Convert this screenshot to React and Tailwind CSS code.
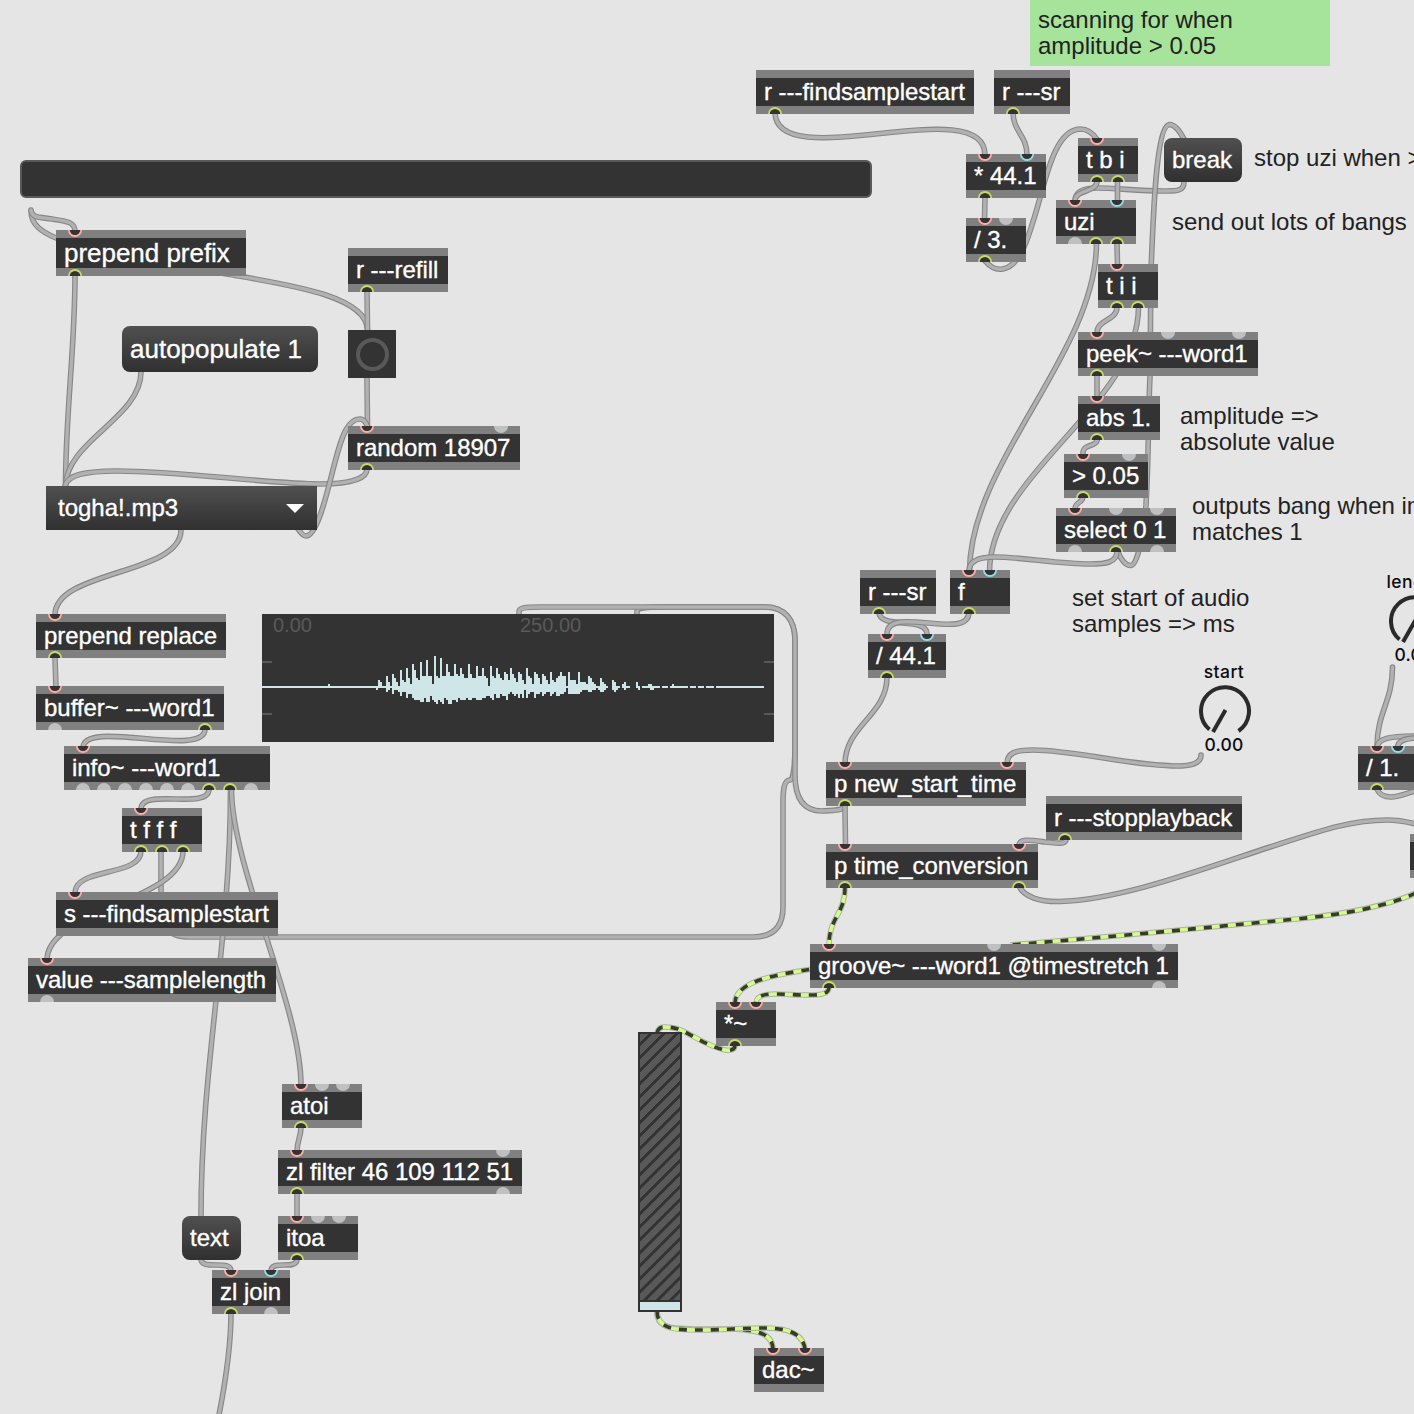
import React from "react";

const P = "#ffaca1";
const L = "#c9dc62";
const C = "#8fdde9";
const G = null;

// [x, y, width, label, inlets, outlets, height?]
const objects = [
  [56, 230, 190, "prepend prefix", [[19, P]], [[19, L]], 46],
  [348, 248, 100, "r ---refill", [], [[19, L]]],
  [348, 426, 172, "random 18907", [[19, P], [153, G]], [[19, L]]],
  [36, 614, 190, "prepend replace", [[19, P]], [[19, L]]],
  [36, 686, 188, "buffer~ ---word1", [[19, P]], [[19, G], [169, L]]],
  [64, 746, 206, "info~ ---word1", [[19, P]], [[19, G], [40, G], [61, G], [82, G], [103, G], [124, G], [145, L], [166, L], [187, G]]],
  [122, 808, 80, "t f f f", [[19, P]], [[19, L], [40, L], [61, L]]],
  [56, 892, 222, "s ---findsamplestart", [[19, P]], []],
  [28, 958, 248, "value ---samplelength", [[19, P]], [[19, G]]],
  [282, 1084, 80, "atoi", [[19, P], [40, G], [61, G]], [[19, L]]],
  [278, 1150, 244, "zl filter 46 109 112 51", [[19, P], [225, G]], [[19, L], [225, G]]],
  [278, 1216, 80, "itoa", [[19, P], [40, G], [61, G]], [[19, L]]],
  [212, 1270, 78, "zl join", [[19, P], [59, C]], [[19, L], [59, G]]],
  [756, 70, 218, "r ---findsamplestart", [], [[19, L]]],
  [994, 70, 76, "r ---sr", [], [[19, L]]],
  [966, 154, 80, "* 44.1", [[19, P], [61, C]], [[19, L]]],
  [966, 218, 60, "/ 3.", [[19, P], [40, G]], [[19, L]]],
  [1078, 138, 60, "t b i", [[19, P]], [[19, L], [40, L]]],
  [1056, 200, 80, "uzi", [[19, P], [61, C]], [[19, G], [40, L], [61, L]]],
  [1098, 264, 60, "t i i", [[19, P]], [[19, L], [40, L]]],
  [1078, 332, 180, "peek~ ---word1", [[19, P], [90, G], [161, G]], [[19, L]]],
  [1078, 396, 82, "abs 1.", [[19, P]], [[19, L]]],
  [1064, 454, 84, "> 0.05", [[19, P], [65, G]], [[19, L]]],
  [1056, 508, 120, "select 0 1", [[19, P], [60, G], [101, G]], [[19, G], [60, L], [101, G]]],
  [950, 570, 60, "f", [[19, P], [40, C]], [[19, L]]],
  [860, 570, 76, "r ---sr", [], [[19, L]]],
  [868, 634, 78, "/ 44.1", [[19, P], [59, C]], [[19, L]]],
  [826, 762, 200, "p new_start_time", [[19, P], [181, P]], [[19, L]]],
  [826, 844, 212, "p time_conversion", [[19, P], [193, P]], [[19, L], [193, L]]],
  [1046, 796, 196, "r ---stopplayback", [], [[19, L]]],
  [810, 944, 368, "groove~ ---word1 @timestretch 1", [[19, P], [184, G], [349, G]], [[19, L], [349, G]]],
  [716, 1002, 60, "*~", [[19, P], [40, P]], [[19, L]]],
  [754, 1348, 70, "dac~", [[19, P], [51, P]], []],
  [1358, 746, 80, "/ 1.", [[19, P], [40, C]], [[19, L]]],
  [1410, 834, 60, "", [], []],
];

// S-shaped cord leaving downward and arriving from above
const s = (x1, y1, x2, y2, d) => `M${x1} ${y1} C${x1} ${y1 + d},${x2} ${y2 - d},${x2} ${y2}`;

const cords = [
  s(775, 112, 985, 155, 65),
  s(1013, 112, 1027, 155, 20),
  "M985 196 L984.5 220",
  "M985 261 C992 269,998 270,1003 269 C1020 266,1028 240,1038 205 C1046 178,1055 130,1080 129 C1087 129,1093 133,1097.500 140",
  "M1184 182 C1184 192,1175 191,1163 191 C1140 191,1115 188,1097 188 C1083 188,1075 192,1075 201",
  s(1097, 181, 1075, 201, 12),
  "M1117.500 181 L1117.500 201",
  "M1118 552 C1121 560,1126 566,1131 565.500 C1138 565,1144 530,1146 505 C1149 450,1148 420,1150 376 L1151 270 C1153 230,1155 124,1170 124.500 C1176 125,1180 132,1184 139",
  s(1096.5, 243, 969.5, 572, 110),
  "M1117 243 L1117.500 265",
  s(1117, 307, 1097, 333, 14),
  s(1138.5, 307, 989.5, 572, 98),
  "M1097 375 L1097 395",
  s(1097.5, 438, 1083, 453, 10),
  s(1083, 496, 1075, 509, 8),
  "M1117 551 C1117 563,1105 564,1090 564 C1060 564,1020 557,995 557 C980 557,969 560,969 571",
  s(879, 612, 927, 634, 18),
  s(969, 612, 887, 634, 30),
  s(887, 677, 845, 764, 38),
  "M1201 755 C1201 764,1190 766,1178 766 C1130 766,1075 750,1033 750 C1015 750,1007 753,1007 764",
  "M161 851 L161 900 C161 925,165 937,190 937 L753 937 C773 937,783 927,783 907 L783 803 C783 790,784 780,790 780 C794 780,795 760,795 745 L795 640 C795 620,785 607,765 607 L665 607 C645 607,637 608,637 611 L637 616",
  "M845 804 C845 811,835 810,822 811 C805 811,795 800,795 775 L795 640 C795 620,785 607,765 607 L540 607 C524 607,519 608,519 612 L519 616",
  "M845 806 L845.500 846",
  "M1066 839 C1066 845,1058 843,1045 842 C1030 840,1019 838,1019 846",
  "M1019 886 C1024 897,1040 902,1060 901.500 C1120 900,1200 870,1270 847 C1320 831,1350 820,1387 820 C1400 820,1408 822,1416 824",
  "M31 211 C31 225,42 232,56 238 C100 255,170 264,227 274 C290 285,367 296,367.500 330",
  "M31 210 C32 218,38 217,52 219 C66 221,75 222,75 231",
  s(75, 275, 65.5, 487, 75),
  s(141, 372, 65.5, 487, 46),
  "M367 469 C367 480,345 484,320 484 C270 484,180 471,117 471 C85 471,66 475,65 487",
  "M367 291 L367.500 330",
  "M367 378 L367.500 428",
  "M298 529 C301 533,303 536,306 536 C318 536,328 488,335 462 C342 435,348 419,360 419 C364 419,367 424,368 428",
  s(181, 530, 55, 615, 45),
  "M55 658 L56 688",
  s(205, 729, 83, 748, 30),
  s(209, 789, 141, 809, 22),
  s(230.5, 789, 201, 1217, 155),
  s(231.5, 789, 301, 1085, 78),
  s(183, 851, 47, 960, 50),
  s(141, 851, 75, 893, 26),
  s(301, 1127, 297, 1151, 10),
  "M297 1193 L297 1217",
  s(297, 1259, 271, 1271, 12),
  s(201, 1259, 231, 1271, 12),
  "M231 1313 C231 1350,225 1385,218 1420",
  s(1392.5, 667, 1377, 747, 35),
  "M1420 736 C1390 736,1377 738,1377 748",
  "M1420 738 C1404 738,1397.500 741,1397.500 748",
  "M1377 789 C1379 794,1384 797,1391 797 C1400 797,1407 793,1418 790",
];

const signals = [
  s(845, 887, 829, 945, 28),
  "M1416 893 C1385 907,1345 914,1297 919 C1230 925,1180 931,1010 945",
  "M829 987 C829 996,815 995,805 995 C795 995,785 994,775 994 C762 994,756 997,756 1003",
  "M825 967 C790 973,735 978,735 1003",
  "M735 1045 C735 1050,730 1051,725 1050 C710 1047,695 1037,683 1031 C675 1027,667 1027,664 1027 C660 1027,658 1029,657 1033",
  "M657 1311 C657 1331,672 1329,730 1329 C755 1330,773 1332,773 1350",
  "M657 1311 C657 1331,680 1330,700 1330 C720 1330,745 1328,765 1328 C790 1328,804 1335,805 1350",
];

// amplitude per two-pixel column, starting at column 57
const up = [
  0, 3, 2, 0, 0, 5, 2, 0, 6, 4, 2, 0, 8, 3, 2, 9, 4, 1, 11, 8, 4, 3, 12, 5, 5, 13, 5, 5, 1, 15, 5, 4, 14, 5, 5, 11, 7, 5, 5, 11,
  6, 5, 9, 6, 4, 4, 11, 6, 4, 4, 10, 5, 5, 9, 5, 4, 0, 10, 5, 4, 9, 6, 4, 3, 7, 6, 3, 9, 6, 4, 2, 7, 6, 3, 1, 9, 5, 4, 1, 7,
  6, 4, 1, 6, 5, 3, 1, 7, 3, 2, 4, 5, 7, 5, 5, 0, 7, 3, 3, 3, 1, 7, 2, 2, 2, 1, 5, 4, 2, 1, 0, 0, 4, 2, 1, 0, -1, -1, 3, 2,
  0, 0, -1, 1, 2, 0, 0, -1, -1, -1, 2, 0, -1, 0, 0, 0, 1, 1, 0, 0, 0, 0, -1, 0, 0, 0, -1, 0, 1, 0, 0, 0, 0, 0, 0, 0, -1, 0, 0, 0,
  -1, 0, 0, 0, -1, 0, 0, 0, 0, -1,
];
const down = [
  1, 0, 0, 0, 0, 2, 1, 0, 3, 1, 1, 2, 4, 2, 2, 5, 3, 3, 5, 6, 6, 6, 7, 7, 5, 7, 7, 4, 6, 7, 8, 6, 7, 8, 5, 6, 8, 8, 6, 6,
  7, 5, 6, 6, 6, 5, 6, 6, 5, 5, 6, 6, 6, 5, 5, 4, 4, 5, 6, 3, 5, 5, 3, 4, 4, 6, 3, 2, 3, 4, 3, 5, 3, 5, 1, 5, 3, 2, 2, 5,
  3, 3, 2, 4, 3, 2, 2, 4, 3, 2, 4, 4, 3, 3, 2, 0, 3, 3, 3, 3, 3, 3, 2, 1, 1, 1, 2, 2, 1, 1, 0, 1, 2, 2, 1, 0, 0, 0, 1, 2,
  1, 0, 0, 0, 1, 0, 0, 0, 0, 0, 0, 1, 0, 0, 0, 0, 0, 1, 1,
];

function Port({ x, color, inlet }) {
  return (
    <svg
      className={inlet ? "absolute top-0" : "absolute bottom-0"}
      style={{ left: x - 7 }}
      width="14"
      height="7"
      viewBox={inlet ? "0 0 14 7" : "0 -7 14 7"}
    >
      <circle cx="7" cy="0" r="7" fill={color || "#bfc0c2"} />
      {color && <circle cx="7" cy={inlet ? -0.3 : 0.3} r="5.3" fill="#333333" />}
    </svg>
  );
}

function Box({ data }) {
  const [x, y, w, label, ins, outs, h = 44] = data;
  return (
    <div className="absolute flex flex-col bg-[#333333]" style={{ left: x, top: y, width: w, height: h }}>
      <div className="h-2 shrink-0 bg-[#808080]" />
      <div
        className={
          "flex grow items-center whitespace-pre pl-2 tracking-[-0.03px] text-white [-webkit-text-stroke:0.35px_white] " +
          (h === 46 ? "text-[26px] leading-[30px]" : "text-[24px] leading-[28px]")
        }
      >
        {label}
      </div>
      <div className="h-2 shrink-0 bg-[#808080]" />
      {ins.map(([px, c]) => <Port key={"i" + px} x={px} color={c} inlet />)}
      {outs.map(([px, c]) => <Port key={"o" + px} x={px} color={c} />)}
    </div>
  );
}

function Message({ className, children }) {
  return (
    <div
      className={
        "absolute flex items-center whitespace-pre rounded-[8px] bg-linear-to-b from-[#505050] to-[#303030] pl-2 text-white [-webkit-text-stroke:0.35px_white] " +
        className
      }
    >
      {children}
    </div>
  );
}

function Comment({ className, children }) {
  return (
    <div className={"absolute whitespace-pre text-[24px] leading-[26px] text-[#222222] " + className}>{children}</div>
  );
}

function Dial({ className, label }) {
  return (
    <div className={"absolute flex w-[60px] flex-col items-center font-['Inter'] text-[17.5px] font-medium leading-[20px] text-[#0c0c0c] " + className}>
      <span className="-ml-[2px] tracking-[0.4px]">{label}</span>
      <svg className="mt-[3px]" width="52" height="50" viewBox="-26 -26 52 50" fill="none" stroke="#2a2a2a" strokeWidth="4">
        <path d="M-15.500 18.500 A24 24 0 1 1 13.500 20" />
        <path d="M0.500 -1 L-12 21" />
      </svg>
      <span className="-ml-[2px] tracking-[0.2px]">0.00</span>
    </div>
  );
}

function Waveform() {
  return (
    <div className="absolute left-[262px] top-[614px] h-[128px] w-[512px] bg-[#333333] text-[20px] leading-[22px] text-[#595959]">
      <svg className="absolute inset-0" width="512" height="128" shapeRendering="crispEdges">
        <g fill="#595959">
          <rect x="0" y="47" width="10" height="2" />
          <rect x="0" y="99" width="10" height="2" />
          <rect x="502" y="47" width="10" height="2" />
          <rect x="502" y="99" width="10" height="2" />
        </g>
        <g fill="#cfe6e8">
          <rect x="0" y="72" width="114" height="2" />
          <rect x="66" y="70" width="2" height="2" />
          <rect x="454" y="72" width="48" height="2" />
          {up.map((u, i) =>
            u < 0 ? null : (
              <rect key={i} x={114 + i * 2} y={72 - u * 2} width="2" height={2 + u * 2 + (down[i] || 0) * 2} />
            )
          )}
        </g>
      </svg>
      <div className="flex">
        <span className="ml-[11px] w-[247px]">0.00</span>
        <span>250.00</span>
      </div>
    </div>
  );
}

function Cords() {
  return (
    <svg className="absolute inset-0" width="1414" height="1414" fill="none">
      {cords.map((d, i) => (
        <g key={i} strokeLinecap="round">
          <path d={d} stroke="#868686" strokeWidth="5.6" />
          <path d={d} stroke="#b1b1b1" strokeWidth="3.4" />
        </g>
      ))}
      {signals.map((d, i) => (
        <g key={i}>
          <path d={d} stroke="#adb0a8" strokeWidth="5.6" />
          <path d={d} stroke="#d3fc8a" strokeWidth="3.6" />
          <path d={d} stroke="#363d26" strokeWidth="3.6" strokeDasharray="8 8" />
        </g>
      ))}
    </svg>
  );
}

export default function App() {
  return (
    <div className="relative h-[1414px] w-[1414px] overflow-hidden bg-[#e5e5e5] font-['Liberation_Sans',Arial,sans-serif]">
      <Cords />
      <div className="absolute left-[20px] top-[160px] h-[38px] w-[852px] rounded-[6px] border-2 border-[#595959] bg-[#333333]" />
      <Comment className="left-[1030px] top-0 h-[66px] w-[300px] bg-[#a6e39b] pl-2 pt-[7px]">{"scanning for when\namplitude > 0.05"}</Comment>
      <Comment className="left-[1254px] top-[145px]">{"stop uzi when >"}</Comment>
      <Comment className="left-[1172px] top-[209px]">send out lots of bangs</Comment>
      <Comment className="left-[1180px] top-[403px]">{"amplitude =>\nabsolute value"}</Comment>
      <Comment className="left-[1192px] top-[493px]">{"outputs bang when in\nmatches 1"}</Comment>
      <Comment className="left-[1072px] top-[585px]">{"set start of audio\nsamples => ms"}</Comment>
      <Waveform />
      {objects.map((o, i) => <Box key={i} data={o} />)}
      <Message className="left-[122px] top-[326px] h-[46px] w-[196px] text-[26px]">autopopulate 1</Message>
      <Message className="left-[1164px] top-[138px] h-[44px] w-[78px] text-[24px]">break</Message>
      <Message className="left-[182px] top-[1216px] h-[44px] w-[59px] text-[24px]">text</Message>
      <div className="absolute left-[46px] top-[486px] flex h-[44px] w-[271px] items-center justify-between bg-linear-to-b from-[#505050] to-[#303030] pl-3 pr-[13px] text-[24px] text-white [-webkit-text-stroke:0.35px_white]">
        <span>togha!.mp3</span>
        <svg width="18" height="9"><path d="M0 0H18L9 9Z" fill="#ffffff" /></svg>
      </div>
      <div className="absolute left-[348px] top-[330px] flex size-[48px] items-center justify-center bg-[#333333]">
        <div className="size-[33px] rounded-full border-4 border-[#595959]" />
      </div>
      <Dial className="left-[1195px] top-[662px]" label="start" />
      <Dial className="left-[1385px] top-[572px]" label="length" />
      <div className="absolute left-[638px] top-[1032px] flex h-[280px] w-[44px] flex-col gap-[2px] border-2 border-[#333333] bg-[#333333]">
        <div className="grow bg-[repeating-linear-gradient(135deg,#595959_0px,#595959_5.800px,#333333_6.300px,#333333_8.700px,#595959_9.200px)]" />
        <div className="h-[8px] bg-[#cfe6e8]" />
      </div>
    </div>
  );
}
